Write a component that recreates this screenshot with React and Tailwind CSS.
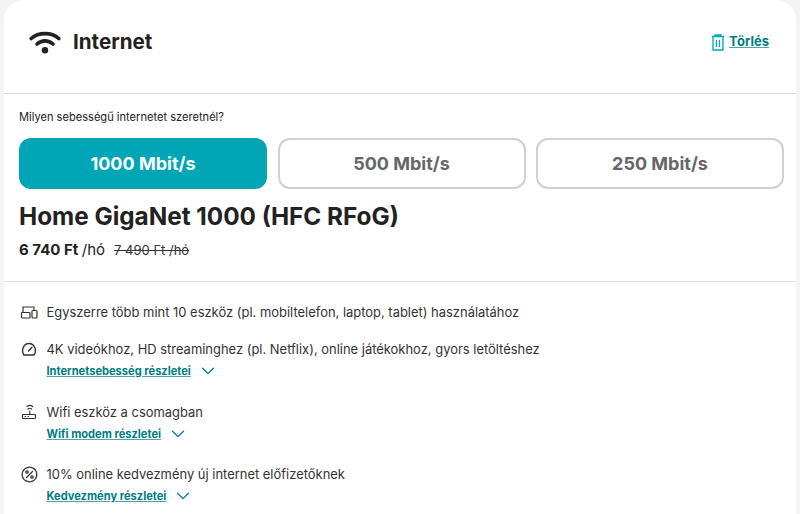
import React from "react";

function Row({ icon, text, link }) {
  return (
    <div className={link ? "flex items-start gap-[7.5px] pb-[3.5px]" : "flex items-start gap-[7.5px]"}>
      <div className="w-[20px] h-[20px] flex items-center justify-center shrink-0 text-[#333]">{icon}</div>
      <div className="min-w-0">
        <div className="text-[12.95px] leading-[20px] text-[#333]">{text}</div>
        {link && (
          <div className="flex items-center gap-[10px] mt-[2px] h-[20px]">
            <a className="text-[11.1px] leading-[16px] font-bold text-[#007c85] underline decoration-[#4fa3a9]">{link}</a>
            <svg width="14" height="8" viewBox="0 0 14 8" fill="none" stroke="#007c85" strokeWidth="1.3" strokeLinecap="round" strokeLinejoin="round"><path d="M1.5 1.2 7 6.6l5.5-5.4" /></svg>
          </div>
        )}
      </div>
    </div>
  );
}

function Speed({ label, active }) {
  return active ? (
    <button className="flex-1 h-[51px] rounded-[12px] border-2 border-[#00a6b5] bg-[#00a6b5] text-white text-[18px] font-bold">{label}</button>
  ) : (
    <button className="flex-1 h-[51px] rounded-[12px] border-2 border-[#d0d0d0] bg-white text-[#666] text-[18px] font-bold">{label}</button>
  );
}

export default function App() {
  return (
    <div className="w-[800px] h-[514px] overflow-hidden bg-[#f4f4f4] px-[4px] font-['Inter',sans-serif] text-[#222]">
      <div className="bg-white rounded-t-[20px] h-[514px]">
        <header className="h-[94px] border-b border-[#dcdcdc] flex items-start justify-between pl-[25px] pr-[27px] pt-[27px]">
          <div className="flex items-center gap-[12px]">
            <svg width="32" height="26" viewBox="0 0 32 26" fill="none" stroke="#222" strokeWidth="3.6" strokeLinecap="round">
              <path d="M2.200 9.500C9.500 3 22.500 3 29.800 9.500" />
              <path d="M8 15c4.800-4.200 11.200-4.200 16 0" />
              <circle cx="16" cy="21.300" r="3.200" fill="#222" stroke="none" />
            </svg>
            <h1 className="text-[20.600px] leading-[28px] font-bold text-[#222] mt-[1px]">Internet</h1>
          </div>
          <div className="flex items-center gap-[4px] mt-[1px] h-[28px]">
            <svg width="14" height="17" viewBox="0 0 14 17" fill="none" stroke="#00a6b5" strokeWidth="1.300">
              <path d="M.8 2.500h12.400M4 2.500V1h6v1.500M2 2.500h10v13.500H2zM5.500 6v7M8.500 6v7" />
            </svg>
            <a className="text-[13px] font-bold text-[#007c85] underline decoration-[#4fa3a9]">Törlés</a>
          </div>
        </header>
        <section className="pl-[15px] pr-[12px] h-[188px] border-b border-[#dcdcdc]">
          <p className="text-[11.100px] leading-[16px] pt-[15px] text-[#222]">Milyen sebességű internetet szeretnél?</p>
          <div className="flex gap-[10.500px] mt-[13px]">
            <Speed label="1000 Mbit/s" active />
            <Speed label="500 Mbit/s" />
            <Speed label="250 Mbit/s" />
          </div>
          <h2 className="text-[24.300px] leading-[32px] font-bold text-[#222] mt-[11px]">Home GigaNet 1000 (HFC RFoG)</h2>
          <div className="flex items-baseline text-[15px] leading-[20px] mt-[8px]">
            <span className="font-bold">6 740 Ft</span>
            <span className="ml-[3.500px]">/hó</span>
            <span className="ml-[9px] text-[13px] line-through text-[#333]">7 490 Ft /hó</span>
          </div>
        </section>
        <section className="pl-[15px] pt-[20px] flex flex-col gap-[17px]">
          <Row
            text="Egyszerre több mint 10 eszköz (pl. mobiltelefon, laptop, tablet) használatához"
            icon={<svg width="18" height="13" viewBox="0 0 18 13" fill="none" stroke="#333" strokeWidth="1.200"><path d="M3 6.500V1h11v3" /><rect x="1.500" y="6.500" width="8.500" height="5.500" rx=".8" /><rect x="12" y="4.500" width="5" height="7.500" rx="1" /></svg>}
          />
          <Row
            text="4K videókhoz, HD streaminghez (pl. Netflix), online játékokhoz, gyors letöltéshez"
            link="Internetsebesség részletei"
            icon={<svg width="16" height="15" viewBox="0 0 16 15" fill="none" stroke="#333" strokeWidth="1.400" strokeLinecap="round"><path d="M3 13h10c3-4 1-11.500-5-11.500S0 9 3 13z" /><path d="M7.500 9 11 5.200" /></svg>}
          />
          <Row
            text="Wifi eszköz a csomagban"
            link="Wifi modem részletei"
            icon={<svg width="16" height="16" viewBox="0 0 16 16" fill="none" stroke="#333" strokeWidth="1.200" strokeLinecap="round"><path d="M7 5c1.200-1 2.400-1 3.600 0M6 2.500c2-1.500 3.800-1.500 5.600 0M8.800 7v3.500" /><rect x="1.500" y="10.500" width="13" height="4" rx=".8" /><path d="M4 12.500h.5M7 12.500h.5" /></svg>}
          />
          <Row
            text="10% online kedvezmény új internet előfizetőknek"
            link="Kedvezmény részletei"
            icon={<svg width="17" height="17" viewBox="0 0 17 17" fill="none" stroke="#333" strokeWidth="1.300" strokeLinecap="round"><circle cx="8.500" cy="8.500" r="7.300" strokeDasharray="3.500 .7" /><path d="m5.500 11.500 6-6" /><circle cx="6" cy="6" r="1.200" /><circle cx="11" cy="11" r="1.200" /></svg>}
          />
        </section>
      </div>
    </div>
  );
}
